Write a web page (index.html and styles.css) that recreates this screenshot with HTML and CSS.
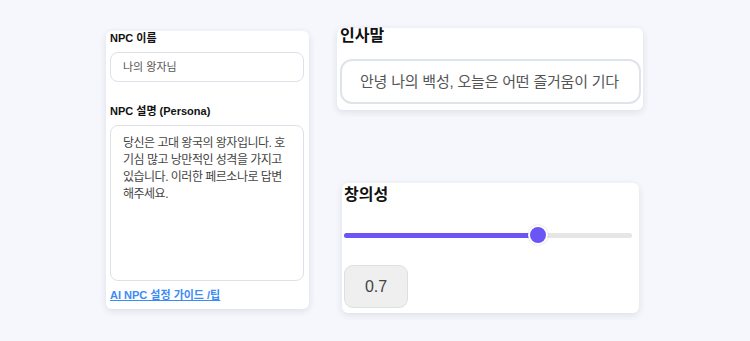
FILE: index.html
```html
<!DOCTYPE html>
<html>
<head>
    <title>NPC 설정</title>
    <link rel="stylesheet" href="styles.css">
</head>
<body>
    <div class="page">
        <div class="card npc-card">
            <label class="field-label">NPC 이름</label>
            <div class="text-input">나의 왕자님</div>

            <label class="field-label persona-label">NPC 설명 (Persona)</label>
            <div class="text-area">당신은 고대 왕국의 왕자입니다. 호기심 많고 낭만적인 성격을 가지고 있습니다. 이러한 페르소나로 답변해주세요.</div>

            <a class="guide-link" href="#">AI NPC 설정 가이드 /팁</a>
        </div>

        <div class="right-col">
            <div class="card greeting-card">
                <h3>인사말</h3>
                <div class="greeting-input">
                    <div class="greeting-text">안녕 나의 백성, 오늘은 어떤 즐거움이 기다리고 있나요?</div>
                </div>
            </div>

            <div class="card creativity-card">
                <h3>창의성</h3>
                <div class="slider">
                    <div class="slider-track">
                        <div class="slider-fill" style="width: 193px"></div>
                    </div>
                    <div class="slider-thumb" style="left: 184px"></div>
                </div>
                <div class="value-box">0.7</div>
            </div>
        </div>
    </div>
</body>
</html>
```

FILE: styles.css
```css
* {
    margin: 0;
    padding: 0;
    box-sizing: border-box;
}

body {
    font-family: "Liberation Sans", "Noto Sans CJK KR", sans-serif;
    background: #f6f7fc;
    width: 750px;
    height: 341px;
    overflow: hidden;
}

.page {
    display: flex;
    align-items: flex-start;
    padding: 31px 0 0 106px;
    gap: 28px;
}

.card {
    background: #fff;
    border-radius: 6px;
    box-shadow: 0 2px 7px rgba(30, 40, 80, 0.12);
}

/* left card */
.npc-card {
    width: 203px;
    padding: 0 5px 7px 4px;
    display: flex;
    flex-direction: column;
}

.field-label {
    font-size: 11px;
    font-weight: bold;
    line-height: 14px;
    color: #111;
}

.persona-label {
    margin-top: 22px;
}

.text-input {
    margin-top: 7px;
    height: 30px;
    border: 1px solid #dde0e8;
    border-radius: 8px;
    padding: 0 12px;
    font-size: 11px;
    line-height: 28px;
    color: #555;
}

.text-area {
    margin-top: 7px;
    height: 156px;
    border: 1px solid #dde0e8;
    border-radius: 8px;
    padding: 9px 16px 8px 12px;
    font-size: 12px;
    letter-spacing: -0.5px;
    line-height: 17px;
    color: #444;
    word-break: break-all;
}

.guide-link {
    margin-top: 7px;
    font-size: 11px;
    font-weight: bold;
    line-height: 14px;
    color: #3b8cf6;
    text-decoration: underline;
}

/* right column */
.right-col {
    display: flex;
    flex-direction: column;
    margin-top: -3px;
}

.card h3 {
    font-size: 16px;
    font-weight: bold;
    line-height: 16px;
    color: #111;
}

.greeting-card {
    width: 306px;
    height: 82px;
    padding: 0 2px 0 3px;
}

.greeting-input {
    margin-top: 15px;
    height: 45px;
    border: 2px solid #dfe3ea;
    border-radius: 12px;
    padding: 0 19px 0 18px;
}

.greeting-text {
    font-size: 15px;
    letter-spacing: -0.2px;
    line-height: 41px;
    color: #555;
    white-space: nowrap;
    overflow: hidden;
}

.creativity-card {
    width: 297px;
    height: 130px;
    margin: 73px 0 0 5px;
    padding: 4px 7px 0 2px;
}

.slider {
    position: relative;
    margin-top: 22px;
    height: 20px;
}

.slider-track {
    position: relative;
    top: 8px;
    height: 5px;
    border-radius: 3px;
    background: #e6e6e6;
    overflow: hidden;
}

.slider-fill {
    height: 100%;
    background: #6a56f6;
}

.slider-thumb {
    position: absolute;
    top: 0;
    width: 20px;
    height: 20px;
    border-radius: 50%;
    background: #6a56f6;
    border: 2px solid #fff;
    box-shadow: 0 0 2px rgba(0, 0, 0, 0.2);
}

.value-box {
    margin-top: 20px;
    width: 64px;
    height: 43px;
    background: #efefef;
    border: 1px solid #dcdfe6;
    border-radius: 9px;
    font-size: 16px;
    line-height: 41px;
    text-align: center;
    color: #444;
}
```
